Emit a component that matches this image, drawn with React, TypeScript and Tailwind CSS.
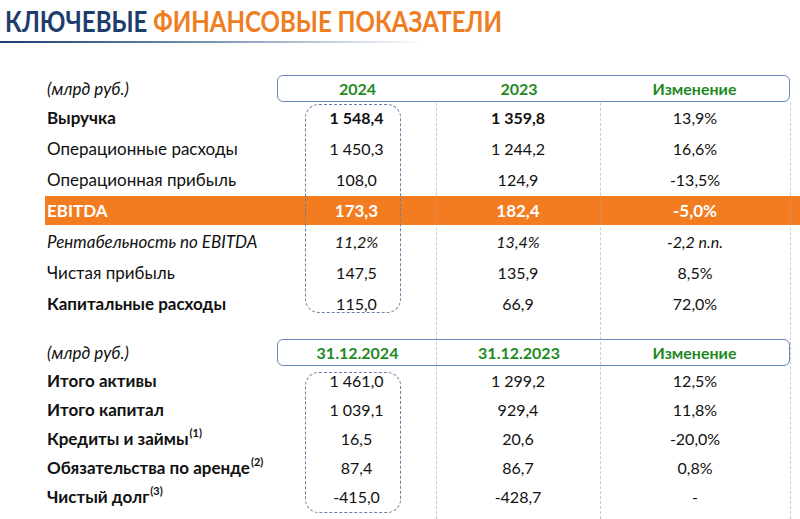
const font = { fontFamily: "Lato, 'Open Sans', 'Noto Sans', sans-serif" };

type Row = {
  label: string;
  sup?: string;
  values: [string, string, string];
  boldLabel?: boolean;
  boldValues?: [boolean, boolean, boolean];
  italic?: boolean;
};

const pnl: Row[] = [
  { label: "Выручка", values: ["1 548,4", "1 359,8", "13,9%"], boldLabel: true, boldValues: [true, true, false] },
  { label: "Операционные расходы", values: ["1 450,3", "1 244,2", "16,6%"] },
  { label: "Операционная прибыль", values: ["108,0", "124,9", "-13,5%"] },
];

const pnl2: Row[] = [
  { label: "Рентабельность по EBITDA", values: ["11,2%", "13,4%", "-2,2 п.п."], italic: true },
  { label: "Чистая прибыль", values: ["147,5", "135,9", "8,5%"] },
  { label: "Капитальные расходы", values: ["115,0", "66,9", "72,0%"], boldLabel: true },
];

const balance: Row[] = [
  { label: "Итого активы", values: ["1 461,0", "1 299,2", "12,5%"], boldLabel: true },
  { label: "Итого капитал", values: ["1 039,1", "929,4", "11,8%"], boldLabel: true },
  { label: "Кредиты и займы", sup: "(1)", values: ["16,5", "20,6", "-20,0%"], boldLabel: true },
  { label: "Обязательства по аренде", sup: "(2)", values: ["87,4", "86,7", "0,8%"], boldLabel: true },
  { label: "Чистый долг", sup: "(3)", values: ["-415,0", "-428,7", "-"], boldLabel: true },
];

const grid = "grid grid-cols-[232px_159px_164px_190px]";

const DataRow = ({ row, h }: { row: Row; h: string }) => (
  <div className={`${grid} ${h} items-center text-[16px] text-[#111]`}>
    <div className={`pl-[2px] text-[17px] ${row.boldLabel ? "font-bold" : ""} ${row.italic ? "italic" : ""}`}>
      {row.label}
      {row.sup && <sup className="text-[11px] font-bold ml-[1px] -top-[0.7em]">{row.sup}</sup>}
    </div>
    {row.values.map((v, i) => (
      <div
        key={i}
        className={`text-center ${row.boldValues?.[i] ? "font-bold" : ""} ${row.italic ? "italic" : ""}`}>
        {v}
      </div>
    ))}
  </div>
);

const HeaderRow = ({ cols, h }: { cols: string[]; h: string }) => (
  <div className={`${grid} items-center text-[16px]`}>
    <div className="pl-[2px] text-[17px] italic text-[#111]">(млрд руб.)</div>
    <div className={`col-span-3 ${h} grid grid-cols-[159px_164px_187px] items-center rounded-[6px] border border-[#6688bf] font-bold text-[#1f8a1f]`}>
      {cols.map((c) => (
        <div key={c} className="text-center">
          {c}
        </div>
      ))}
    </div>
  </div>
);

export default function App() {
  return (
    <div className="relative w-[800px] h-[519px] bg-white overflow-hidden" style={font}>
      <div className="pl-[5px] pt-[6px] h-[36px] text-[29px] leading-[30px] font-bold">
        <div className="inline-block whitespace-nowrap origin-left scale-x-[0.83]">
          <span className="text-[#1e3c6c]">КЛЮЧЕВЫЕ </span>
          <span className="text-[#ef7d22]">ФИНАНСОВЫЕ ПОКАЗАТЕЛИ</span>
        </div>
      </div>
      <div className="mt-[5px] h-[2px] w-[425px] bg-gradient-to-r from-[#1e3c6c] via-[#7a95b8] to-transparent" />

      <div className="pl-[45px] mt-[32px]">
        <HeaderRow cols={["2024", "2023", "Изменение"]} h="h-[27px]" />
        {pnl.map((r) => (
          <DataRow key={r.label} row={r} h="h-[31px]" />
        ))}
        <div className={`${grid} h-[29px] my-[1px] items-center bg-[#f27c1f] text-white font-bold text-[17px]`}>
          <div className="pl-[2px]">EBITDA</div>
          <div className="text-center">173,3</div>
          <div className="text-center">182,4</div>
          <div className="text-center">-5,0%</div>
        </div>
        {pnl2.map((r) => (
          <DataRow key={r.label} row={r} h="h-[31px]" />
        ))}

        <div className="mt-[20px]">
          <HeaderRow cols={["31.12.2024", "31.12.2023", "Изменение"]} h="h-[27px]" />
          {balance.map((r) => (
            <DataRow key={r.label} row={r} h="h-[29px]" />
          ))}
        </div>
      </div>

      {/* column separators */}
      <div className="absolute left-[436px] top-[103px] bottom-0 border-l border-dashed border-[#a8a8a8]/60" />
      <div className="absolute left-[600px] top-[103px] bottom-0 border-l border-dashed border-[#a8a8a8]/60" />
      <div className="absolute left-[790px] top-[103px] bottom-0 border-l border-dashed border-[#a8a8a8]/60" />

      {/* highlight frames around 2024 */}
      <div className="absolute left-[305px] top-[104px] w-[96px] h-[209px] rounded-[14px] border border-dashed border-[#6a80a3]" />
      <div className="absolute left-[305px] top-[372px] w-[96px] h-[141px] rounded-[14px] border border-dashed border-[#6a80a3]" />
    </div>
  );
}
